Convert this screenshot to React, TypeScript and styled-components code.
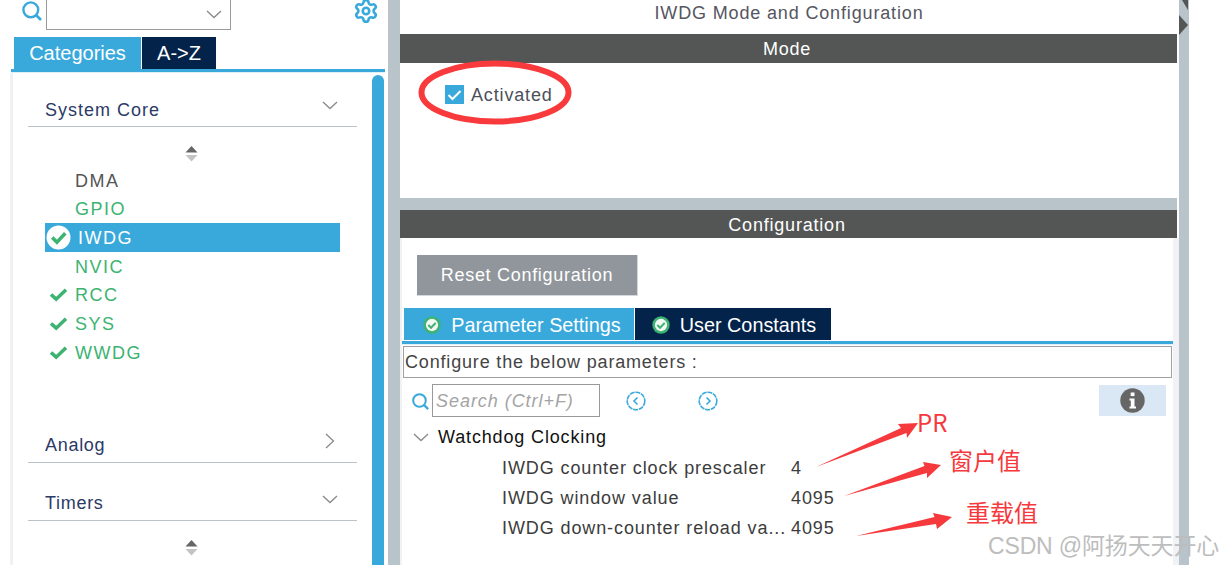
import React from "react";
import styled, { createGlobalStyle } from "styled-components";
import { Settings } from "lucide-react";

const blue = "#39a9dc";
const navy = "#03234b";
const green = "#3cb371";
const grey = "#b8c3ca";
const band = "#545655";

const GlobalStyle = createGlobalStyle`
  html, body { margin: 0; padding: 0; background: #fff; }
  body { font-family: "Liberation Sans", Arial, sans-serif; }
`;

const Page = styled.div`
  position: relative;
  display: flex;
  width: 1223px;
  height: 565px;
  overflow: hidden;
  background: #fff;
  font-size: 18px;
  color: #464650;
`;

const Sidebar = styled.aside`
  display: flex;
  flex-direction: column;
  flex: 0 0 388px;
  height: 565px;
`;

const TopRow = styled.div`
  display: flex;
  align-items: flex-end;
  height: 30px;
  padding: 0 9px 0 22px;
  color: ${blue};
`;

const Combo = styled.div`
  display: flex;
  align-items: center;
  justify-content: flex-end;
  box-sizing: border-box;
  width: 185px;
  height: 31px;
  margin: 0 auto 0 4px;
  padding: 0 8px 0 0;
  border: 1px solid #9a9a9a;
`;

const Tabs = styled.div<{ $left: number; $top: number }>`
  display: flex;
  gap: 1px;
  height: 32px;
  margin: ${(p) => p.$top}px 0 0 ${(p) => p.$left}px;
`;

const Tab = styled.div<{ $active?: boolean; $width: number }>`
  display: flex;
  align-items: center;
  justify-content: center;
  gap: 10px;
  width: ${(p) => p.$width}px;
  background: ${(p) => (p.$active ? blue : navy)};
  color: #fff;
  font-size: 20px;
`;

const ConfigTab = styled(Tab)<{ $nudge?: number }>`
  box-sizing: border-box;
  padding: 2px 0 0 ${(p) => p.$nudge ?? 0}px;
  font-size: 19.8px;
`;

const BlueRule = styled.div`
  height: 3px;
  margin: 0 3px 0 11px;
  background: ${blue};
  border-bottom: 1px solid #dff0f8;
`;

const Panel = styled.div`
  display: flex;
  flex: 1;
  min-height: 0;
  margin: 0 4px 0 10px;
  border-left: 3px solid #f0f1f3;
  padding-top: 2px;
`;

const PanelBody = styled.div`
  flex: 1;
  padding: 0 15px;
`;

const Scrollbar = styled.div`
  flex: 0 0 12px;
  background: ${blue};
  border-radius: 6px 6px 0 0;
`;

const GroupHead = styled.div<{ $top: number; $track: number }>`
  display: flex;
  align-items: center;
  justify-content: space-between;
  box-sizing: border-box;
  height: 37px;
  margin-top: ${(p) => p.$top}px;
  padding: 4px 18px 0 17px;
  border-bottom: 1px solid ${grey};
  color: #2b3a66;
  font-size: 18px;
  letter-spacing: ${(p) => p.$track}px;
`;

const HeadChevron = styled.span<{ $inset?: number }>`
  display: flex;
  margin: 0 ${(p) => p.$inset ?? 1}px 9px 0;
`;

const SortSlot = styled.div<{ $height: number }>`
  display: flex;
  align-items: flex-end;
  justify-content: center;
  height: ${(p) => p.$height}px;
  padding-right: 2px;
`;

const PeripheralList = styled.div`
  display: grid;
  grid-auto-rows: 28.67px;
  margin-top: 4px;
`;

const Peripheral = styled.div<{ $selected?: boolean; $plain?: boolean }>`
  display: flex;
  align-items: center;
  width: 295px;
  margin-left: 17px;
  background: ${(p) => (p.$selected ? blue : "transparent")};
  color: ${(p) => (p.$selected ? "#fff" : p.$plain ? "#555" : green)};
  font-size: 18px;
  letter-spacing: 1.5px;
`;

const PeripheralIcon = styled.span`
  display: flex;
  align-items: center;
  justify-content: center;
  box-sizing: border-box;
  flex: 0 0 30px;
  height: 100%;
  padding-right: 4px;
`;

const PeripheralName = styled.span<{ $selected?: boolean }>`
  margin: 2px 0 0 ${(p) => (p.$selected ? 3 : 0)}px;
`;

const Divider = styled.div`
  flex: 0 0 12px;
  background: ${grey};
`;

const Main = styled.main`
  display: flex;
  flex-direction: column;
  flex: 0 0 777px;
  height: 565px;
`;

const Title = styled.div`
  display: flex;
  align-items: center;
  justify-content: center;
  box-sizing: border-box;
  flex: 0 0 34px;
  padding: 0 0 7px 1px;
  font-size: 18px;
  letter-spacing: 0.85px;
  color: #55565f;
`;

const Band = styled.div<{ $height: number }>`
  display: flex;
  align-items: center;
  justify-content: center;
  box-sizing: border-box;
  flex: 0 0 ${(p) => p.$height}px;
  padding: 2px 3px 0 0;
  background: ${band};
  color: #fff;
  font-size: 18px;
  letter-spacing: 0.8px;
`;

const ModeBody = styled.div`
  height: 113px;
  padding: 22px 0 0 45px;
`;

const CheckRow = styled.label`
  display: flex;
  align-items: center;
  gap: 7px;
  height: 19px;
  font-size: 18px;
  letter-spacing: 0.85px;
  color: #4d4f5a;
`;

const CheckLabel = styled.span`
  margin-top: 1px;
`;

const CheckBox = styled.span`
  display: flex;
  align-items: center;
  justify-content: center;
  width: 19px;
  height: 19px;
  background: ${blue};
`;

const Gap = styled.div`
  flex: 0 0 12px;
  background: ${grey};
`;

const ConfigBody = styled.div`
  flex: 1;
  padding: 17px 0 0 0;
  border-right: 6px solid #f0f2f5;
  border-left: 2px solid #f0f2f5;
  margin-right: -2px;
`;

const ResetButton = styled.button`
  display: block;
  width: 221px;
  height: 41px;
  margin-left: 15px;
  border: 0;
  border-right: 1px solid #d4d8db;
  border-bottom: 1px solid #d4d8db;
  background: #90969b;
  color: #fff;
  font-family: inherit;
  font-size: 18px;
  letter-spacing: 0.7px;
  padding: 0;
`;

const ConfigRule = styled.div`
  height: 3px;
  margin-top: 1px;
  background: ${blue};
  border-bottom: 1px solid #dff0f8;
`;

const DescBox = styled.div`
  display: flex;
  align-items: center;
  box-sizing: border-box;
  height: 32px;
  margin: 1px 1px 0 1px;
  padding-left: 1px;
  border: 1px solid #a0a0a0;
  font-size: 18px;
  letter-spacing: 0.83px;
  color: #444;
`;

const SearchRow = styled.div`
  display: flex;
  align-items: center;
  height: 32px;
  margin-top: 6px;
  padding: 0 7px 0 10px;
  color: ${blue};
`;

const SearchInput = styled.div`
  display: flex;
  align-items: center;
  box-sizing: border-box;
  width: 168px;
  height: 33px;
  margin: 0 26px 0 3px;
  padding: 2px 0 0 3px;
  border: 1px solid #999;
  color: #a4a4a4;
  font-size: 18px;
  font-style: italic;
  letter-spacing: 0.95px;
`;

const NavButton = styled.span`
  display: flex;
  width: 20px;
  margin: 2px 52px 0 0;
`;

const InfoBox = styled.div`
  display: flex;
  align-items: center;
  justify-content: center;
  width: 67px;
  height: 31px;
  margin-left: auto;
  background: #d9e8f4;
`;

const TreeHead = styled.div`
  display: flex;
  align-items: center;
  gap: 9px;
  height: 31px;
  margin-top: 6px;
  padding-left: 11px;
  color: #111;
  font-size: 18px;
  letter-spacing: 0.85px;
`;

const ParamRow = styled.div`
  display: grid;
  grid-template-columns: 289px auto;
  align-items: center;
  height: 30px;
  padding-left: 100px;
  font-size: 18px;
  letter-spacing: 0.9px;
  color: #3c3c3c;
`;

const ParamName = styled.span`
  white-space: nowrap;
`;

const EdgeStrip = styled.div`
  position: relative;
  flex: 0 0 10px;
  margin-left: 2px;
  background: ${grey};
`;

const StripArrows = styled.svg`
  position: absolute;
  top: 0;
  left: 0;
`;

const Markup = styled.svg`
  position: absolute;
  top: 0;
  left: 0;
  pointer-events: none;
`;

const Note = styled.span<{ $x: number; $y: number }>`
  position: absolute;
  left: ${(p) => p.$x}px;
  top: ${(p) => p.$y}px;
  color: #f6393c;
  font-family: "Noto Sans CJK SC", "Liberation Sans", sans-serif;
  font-size: 24px;
  line-height: 28px;
  white-space: nowrap;
`;

const Watermark = styled.span`
  position: absolute;
  left: 988px;
  top: 532px;
  color: #bdbdbd;
  font-family: "Liberation Sans", "Noto Sans CJK SC", sans-serif;
  font-size: 23px;
  letter-spacing: -0.15px;
  line-height: 28px;
  white-space: nowrap;
`;

function Magnifier({ size, lift = 0 }: { size: number; lift?: number }) {
  return (
    <svg width={size} height={size} viewBox="0 0 20 20" style={{ marginBottom: lift }}>
      <circle cx="8.8" cy="8.8" r="7.4" fill="none" stroke={blue} strokeWidth="2.4" />
      <path d="M14 14l5 5" fill="none" stroke={blue} strokeWidth="2.6" />
    </svg>
  );
}

function ChevronDown({ color = "#8a8a8a" }: { color?: string }) {
  return (
    <svg width="16" height="9" viewBox="0 0 16 9">
      <path d="M1 1l7 6.5L15 1" fill="none" stroke={color} strokeWidth="1.3" />
    </svg>
  );
}

function ChevronRight() {
  return (
    <svg width="10" height="16" viewBox="0 0 10 16">
      <path d="M1 1l7.5 7L1 15" fill="none" stroke="#8a8a8a" strokeWidth="1.3" />
    </svg>
  );
}

function SortArrows() {
  return (
    <svg width="13" height="16" viewBox="0 0 13 16">
      <path d="M6.5 0L12.5 6.5H.5z" fill="#666" />
      <path d="M.5 9h12L6.5 15.5z" fill="#c4c4c4" />
    </svg>
  );
}

function Tick() {
  return (
    <svg width="19" height="15" viewBox="0 0 20 16">
      <path d="M2 8l5.5 5L18 3" fill="none" stroke={green} strokeWidth="3.8" />
    </svg>
  );
}

function TickBadge() {
  return (
    <svg width="25" height="25" viewBox="0 0 24 24">
      <circle cx="12" cy="12" r="11.5" fill="#fff" />
      <path d="M6 12l4.5 4.5L18.5 8" fill="none" stroke={green} strokeWidth="3.4" />
    </svg>
  );
}

function TabBadge() {
  return (
    <svg width="18" height="18" viewBox="0 0 17 17">
      <circle cx="8.5" cy="8.5" r="8.2" fill={green} />
      <circle cx="8.5" cy="8.5" r="5.8" fill="#f4f8f4" />
      <path d="M5 8.5l2.6 2.6L12 6.5" fill="none" stroke={green} strokeWidth="2" />
    </svg>
  );
}

function RoundArrow({ dir }: { dir: "left" | "right" }) {
  return (
    <svg width="20" height="20" viewBox="0 0 20 20">
      <circle cx="10" cy="10" r="8.8" fill="none" stroke={blue} strokeWidth="1.6" strokeDasharray="5 0.8" />
      <path
        d={dir === "left" ? "M11.5 6.5L8 10l3.5 3.5" : "M8.5 6.5L12 10l-3.5 3.5"}
        fill="none"
        stroke={blue}
        strokeWidth="1.6"
      />
    </svg>
  );
}

function InfoIcon() {
  return (
    <svg width="25" height="25" viewBox="0 0 25 25">
      <circle cx="12.5" cy="12.5" r="12.2" fill="#666" />
      <rect x="10.7" y="4.5" width="3.8" height="3.6" fill="#fff" />
      <path d="M9.5 10.5h5v8h1.5v2H9.5v-2h1.3v-6H9.5z" fill="#fff" />
    </svg>
  );
}

const peripherals = [
  { name: "DMA", plain: true },
  { name: "GPIO" },
  { name: "IWDG", selected: true },
  { name: "NVIC" },
  { name: "RCC", ticked: true },
  { name: "SYS", ticked: true },
  { name: "WWDG", ticked: true },
];

const params = [
  { name: "IWDG counter clock prescaler", value: "4" },
  { name: "IWDG window value", value: "4095" },
  { name: "IWDG down-counter reload va...", value: "4095" },
];

export default function App() {
  return (
    <Page>
      <GlobalStyle />
      <Sidebar>
        <TopRow>
          <Magnifier size={20} lift={9} />
          <Combo>
            <ChevronDown />
          </Combo>
          <Settings size={26} strokeWidth={2.4} style={{ marginBottom: 6 }} />
        </TopRow>
        <Tabs $left={14} $top={7}>
          <Tab $active $width={127}>Categories</Tab>
          <Tab $width={74}>A-&gt;Z</Tab>
        </Tabs>
        <BlueRule />
        <Panel>
          <PanelBody>
            <GroupHead $top={15} $track={1}>
              System Core
              <HeadChevron>
                <ChevronDown />
              </HeadChevron>
            </GroupHead>
            <SortSlot $height={35}>
              <SortArrows />
            </SortSlot>
            <PeripheralList>
              {peripherals.map((p) => (
                <Peripheral key={p.name} $selected={p.selected} $plain={p.plain}>
                  <PeripheralIcon>
                    {p.ticked && <Tick />}
                    {p.selected && <TickBadge />}
                  </PeripheralIcon>
                  <PeripheralName $selected={p.selected}>{p.name}</PeripheralName>
                </Peripheral>
              ))}
            </PeripheralList>
            <GroupHead $top={59} $track={0.7}>
              Analog
              <HeadChevron $inset={4}>
                <ChevronRight />
              </HeadChevron>
            </GroupHead>
            <GroupHead $top={21} $track={0.7}>
              Timers
              <HeadChevron>
                <ChevronDown />
              </HeadChevron>
            </GroupHead>
            <SortSlot $height={35}>
              <SortArrows />
            </SortSlot>
          </PanelBody>
          <Scrollbar />
        </Panel>
      </Sidebar>
      <Divider />
      <Main>
        <Title>IWDG Mode and Configuration</Title>
        <Band $height={29}>Mode</Band>
        <ModeBody>
          <CheckRow>
            <CheckBox>
              <svg width="15" height="12" viewBox="0 0 15 12">
                <path d="M1.5 6l4 4L13.5 2" fill="none" stroke="#fff" strokeWidth="2" />
              </svg>
            </CheckBox>
            <CheckLabel>Activated</CheckLabel>
          </CheckRow>
        </ModeBody>
        <Gap />
        <Band $height={28}>Configuration</Band>
        <ConfigBody>
          <ResetButton>Reset Configuration</ResetButton>
          <Tabs $left={2} $top={12}>
            <ConfigTab $active $width={230} $nudge={6}>
              <TabBadge />
              Parameter Settings
            </ConfigTab>
            <ConfigTab $width={196} $nudge={2}>
              <TabBadge />
              User Constants
            </ConfigTab>
          </Tabs>
          <ConfigRule />
          <DescBox>Configure the below parameters :</DescBox>
          <SearchRow>
            <Magnifier size={17} lift={-2} />
            <SearchInput>Search (Ctrl+F)</SearchInput>
            <NavButton>
              <RoundArrow dir="left" />
            </NavButton>
            <NavButton>
              <RoundArrow dir="right" />
            </NavButton>
            <InfoBox>
              <InfoIcon />
            </InfoBox>
          </SearchRow>
          <TreeHead>
            <ChevronDown />
            Watchdog Clocking
          </TreeHead>
          {params.map((p) => (
            <ParamRow key={p.name}>
              <ParamName>{p.name}</ParamName>
              <span>{p.value}</span>
            </ParamRow>
          ))}
        </ConfigBody>
      </Main>
      <EdgeStrip>
        <StripArrows width="10" height="40" viewBox="0 0 10 40">
          <path d="M3 0h6v10z" fill={band} />
          <path d="M0 15l9 10-9 10z" fill={band} />
        </StripArrows>
      </EdgeStrip>

      <Markup width="1223" height="565" viewBox="0 0 1223 565">
        <ellipse cx="495" cy="92.5" rx="73.5" ry="29" fill="none" stroke="#f93a3c" strokeWidth="6" />
        <path d="M816 467L906.5 433L907 438L918 423L898 424L901 428z" fill="#f6393c" />
        <path d="M844 496L927 473L927 478L941 465L923 462L924.5 466z" fill="#f6393c" />
        <path d="M856 536L936 524L937 529L952 517L933 513L934.5 517z" fill="#f6393c" />
      </Markup>
      <Note $x={917} $y={408}>PR</Note>
      <Note $x={949} $y={446}>窗户值</Note>
      <Note $x={966} $y={498}>重载值</Note>
      <Watermark>CSDN @阿扬天天开心</Watermark>
    </Page>
  );
}
